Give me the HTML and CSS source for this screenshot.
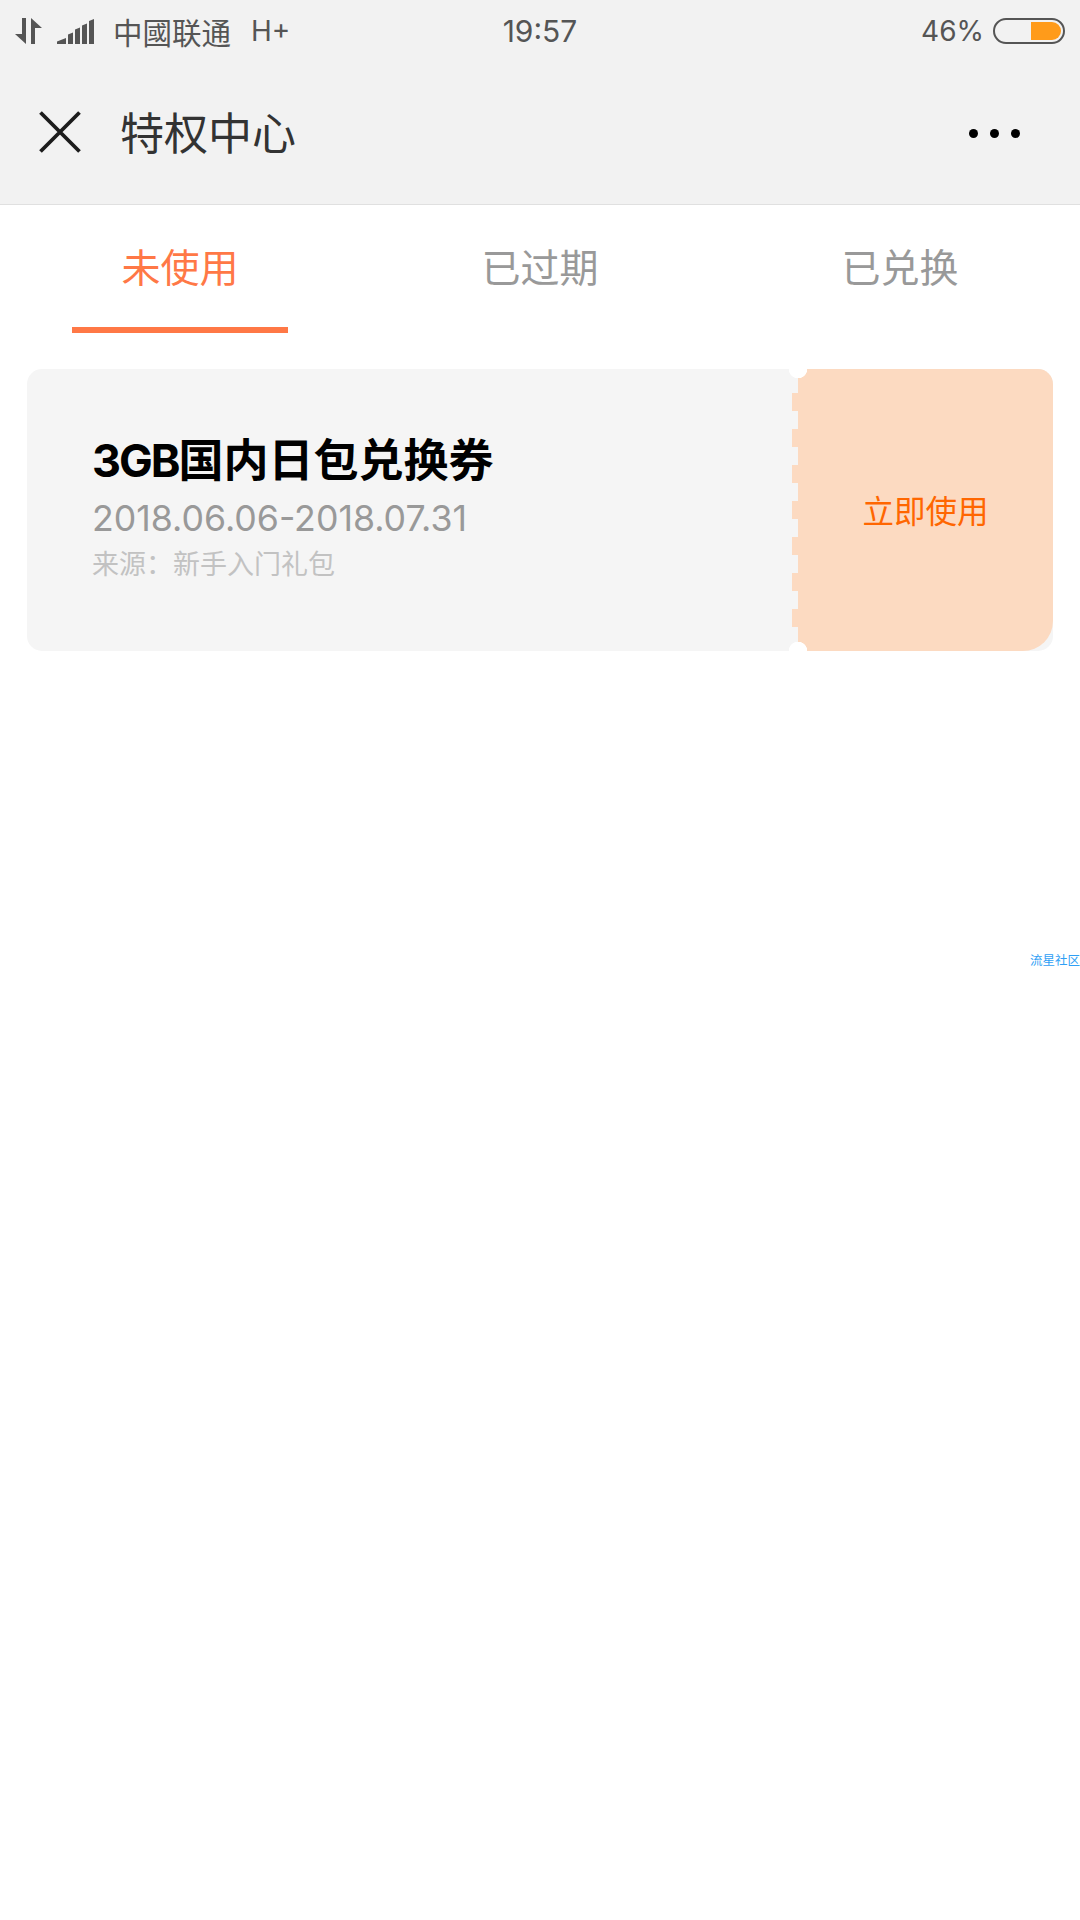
FILE: index.html
```html
<!DOCTYPE html>
<html lang="zh-CN">
<head>
  <meta charset="UTF-8">
  <meta name="viewport" content="width=device-width, initial-scale=1">
  <title>特权中心</title>

  <link rel="stylesheet" href="styles.css">
</head>
<body>
<div class="Top">
  <div class="Status">
    <div class="Status__Left">
      <svg class="Status__Data" width="27" height="26" viewBox="0 0 27 26">
        <path d="M7 0h4v26L0 16h7z" fill="#555"/>
        <path d="M16 0l11 10h-7v16h-4z" fill="#555"/>
      </svg>
      <svg class="Status__Signal" width="37" height="25" viewBox="0 0 37 25">
        <path d="M0 25v-2.500l9-3.500v6zM11 25V15.500l5-2V25zM18 25V10.500l5-2V25zM25 25V6.500l5-2V25zM32 25V2l5-2v25z" fill="#555"/>
      </svg>
      <span class="Status__Carrier">中國联通</span>
      <span class="Status__Network">H+</span>
    </div>
    <div class="Status__Time">19:57</div>
    <div class="Status__Right">
      <span class="Status__Percent">46%</span>
      <div class="Battery"><div class="Battery__Fill"></div></div>
    </div>
  </div>
  <div class="Header">
    <svg class="Header__Close" width="42" height="42" viewBox="0 0 42 42">
      <path d="M1.500 1.500l39 39M40.500 1.500l-39 39" stroke="#1c1c1c" stroke-width="3.800" fill="none"/>
    </svg>
    <div class="Header__Title">特权中心</div>
    <div class="Header__More">
      <span class="Header__Dot"></span>
      <span class="Header__Dot"></span>
      <span class="Header__Dot"></span>
    </div>
  </div>
</div>

<div class="Tabs">
  <div class="Tabs__Item Tabs__Item--active">未使用</div>
  <div class="Tabs__Item">已过期</div>
  <div class="Tabs__Item">已兑换</div>
</div>

<div class="Coupon">
  <div class="Coupon__Info">
    <div class="Coupon__Name"><span class="Coupon__Size">3GB</span>国内日包兑换券</div>
    <div class="Coupon__Date">2018.06.06-2018.07.31</div>
    <div class="Coupon__Source">来源：新手入门礼包</div>
  </div>
  <div class="Coupon__Action">立即使用</div>
</div>

<div class="Watermark">流星社区</div>
</body>
</html>
```

FILE: styles.css
```css
html, body {
  padding: 0;
  margin: 0;
  height: 100%;
  background-color: #ffffff;
  font-family: Inter, "Noto Sans CJK SC", sans-serif;
}

.Top {
  background-color: #f2f2f2;
  border-bottom: 1px solid #e0e0e0;
}

.Status {
  display: grid;
  grid-template-columns: 1fr auto 1fr;
  align-items: center;
  height: 62px;
  color: #555555;
}

.Status__Left {
  display: flex;
  align-items: center;
  padding-left: 15px;
}

.Status__Signal {
  margin-left: 15px;
}

.Status__Carrier {
  margin-left: 19px;
  font-size: 29.500px;
}

.Status__Network {
  margin-left: 20px;
  font-size: 28px;
}

.Status__Time {
  font-size: 30px;
}

.Status__Right {
  display: flex;
  align-items: center;
  justify-content: flex-end;
  padding-right: 15px;
}

.Status__Percent {
  font-size: 28px;
  margin-right: 9px;
}

.Battery {
  display: flex;
  justify-content: flex-end;
  box-sizing: border-box;
  width: 72px;
  height: 26px;
  padding: 2px;
  border: 2px solid #555555;
  border-radius: 13px;
}

.Battery__Fill {
  width: 30px;
  background-color: #ff9b1a;
  border-radius: 0 9px 9px 0;
}

.Header {
  display: flex;
  align-items: center;
  height: 140px;
  padding: 0 60px 2px 39px;
}

.Header__Title {
  flex: 1;
  margin-left: 39px;
  font-size: 44px;
  color: #333333;
  margin-bottom: 2px;
}

.Header__More {
  display: flex;
  gap: 12px;
  margin-top: 2px;
}

.Header__Dot {
  width: 9px;
  height: 9px;
  border-radius: 50%;
  background-color: #000000;
}

.Tabs {
  display: flex;
  height: 128px;
}

.Tabs__Item {
  position: relative;
  flex: 1;
  padding-top: 37px;
  text-align: center;
  font-size: 39px;
  line-height: 52px;
  color: #999999;
}

.Tabs__Item--active {
  color: #ff7846;
}

.Tabs__Item--active::after {
  content: "";
  position: absolute;
  left: 72px;
  right: 72px;
  bottom: 0;
  height: 6px;
  background-color: #ff7846;
}

.Coupon {
  display: flex;
  height: 282px;
  margin: 36px 27px 0;
  background-color: #f5f5f5;
  border-radius: 15px;
}

.Coupon__Info {
  flex: 1;
  padding: 64px 0 0 65px;
}

.Coupon__Name {
  font-size: 45px;
  line-height: 56px;
  font-weight: 700;
  color: #000000;
}

.Coupon__Size {
  letter-spacing: -2px;
}

.Coupon__Date {
  margin-top: 4px;
  font-size: 35.700px;
  line-height: 50px;
  color: #999999;
}

.Coupon__Source {
  margin-top: 3px;
  font-size: 27px;
  line-height: 38px;
  color: #c2c2c2;
}

.Coupon__Action {
  position: relative;
  display: flex;
  align-items: center;
  justify-content: center;
  width: 255px;
  padding-bottom: 2px;
  box-sizing: border-box;
  background-color: #fcdac1;
  border-radius: 0 15px 30px 0;
  font-size: 31.500px;
  color: #ff6600;
}

/* the perforated edge between the two parts of the ticket */
.Coupon__Action::before {
  content: "";
  position: absolute;
  left: -6px;
  top: 24px;
  width: 6px;
  height: 234px;
  background: repeating-linear-gradient(#fcdac1 0, #fcdac1 18px, transparent 18px, transparent 36px);
}

.Coupon__Action::after {
  content: "";
  position: absolute;
  left: -9px;
  top: 0;
  width: 18px;
  height: 282px;
  background:
    radial-gradient(circle at 9px 0, #ffffff 9px, transparent 9.500px),
    radial-gradient(circle at 9px 282px, #ffffff 9px, transparent 9.500px);
}

.Watermark {
  position: absolute;
  right: 0;
  top: 953px;
  font-size: 12.500px;
  line-height: 15px;
  color: #2f9ff5;
}
```
